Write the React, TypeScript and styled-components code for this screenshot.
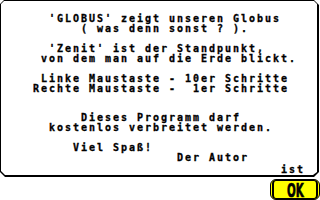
import styled, { createGlobalStyle } from "styled-components";

const GlobalStyle = createGlobalStyle`
  html, body {
    margin: 0;
    padding: 0;
    background: #ffffff;
  }
  body {
    width: 320px;
    height: 200px;
    overflow: hidden;
  }
`;

const Screen = styled.div`
  width: 320px;
  height: 200px;
  background: #ffffff;
  display: flex;
  flex-direction: column;
`;

// black plate with cut corners, the white face sits on it and leaves the border
const Frame = styled.div`
  box-sizing: border-box;
  width: 319px;
  height: 177px;
  padding: 1px 2px 2px 1px;
  background: #000000;
  clip-path: polygon(4px 0, 314px 0, 319px 5px, 319px 172px, 314px 177px, 5px 177px, 0 172px, 0 4px);
  display: flex;
`;

const Face = styled.div`
  flex: 1;
  background: #ffffff;
  padding-top: 13px;
  clip-path: polygon(3px 0, calc(100% - 3px) 0, 100% 3px, 100% calc(100% - 3px), calc(100% - 4px) 100%, 4px 100%, 0 calc(100% - 4px), 0 3px);
  display: flex;
  flex-direction: column;
`;

const Line = styled.div<{ $col: number; $shift?: number }>`
  height: 10px;
  line-height: 10px;
  padding-left: ${(p) => p.$col * 8}px;
  margin-top: ${(p) => p.$shift ?? 0}px;
  white-space: pre;
  font-family: "DejaVu Sans Mono", "Liberation Mono", monospace;
  font-weight: bold;
  font-size: 10px;
  letter-spacing: 1.979px;
  color: #000000;
  -webkit-text-stroke: 0.3px #000000;
`;

const ButtonRow = styled.div`
  display: flex;
  justify-content: flex-end;
  padding-top: 2px;
`;

const Button = styled.div`
  box-sizing: border-box;
  width: 50px;
  height: 21px;
  padding: 0 1px;
  border: 1px solid #000000;
  border-radius: 6px;
  background: #ffff00;
`;

const ButtonFace = styled.div`
  box-sizing: border-box;
  height: 100%;
  border-style: solid;
  border-color: #000000;
  border-width: 1px 2px;
  border-radius: 4px;
  background: #ffff00;
  display: flex;
  align-items: center;
  justify-content: center;
`;

const ButtonLabel = styled.span`
  display: inline-block;
  font-family: "DejaVu Sans", "Liberation Sans", sans-serif;
  font-weight: bold;
  font-size: 19px;
  line-height: 16px;
  color: #000000;
  transform: scaleX(0.54);
  -webkit-text-stroke: 0.7px #000000;
  margin-top: 1px;
`;

const lines: { col: number; text: string; shift?: number }[] = [
  { col: 6, text: "'GLOBUS' zeigt unseren Globus" },
  { col: 10, text: "( was denn sonst ? )." },
  { col: 0, text: "" },
  { col: 6, text: "'Zenit' ist der Standpunkt," },
  { col: 5, text: "von dem man auf die Erde blickt." },
  { col: 0, text: "" },
  { col: 5, text: "Linke Maustaste - 10er Schritte" },
  { col: 4, text: "Rechte Maustaste -  1er Schritte" },
  { col: 0, text: "" },
  { col: 0, text: "" },
  { col: 10, text: "Dieses Programm darf" },
  { col: 6, text: "kostenlos verbreitet werden." },
  { col: 0, text: "" },
  { col: 9, text: "Viel Spaß!" },
  { col: 22, text: "Der Autor" },
  { col: 35, text: "ist", shift: 2 },
];

export default function App() {
  return (
    <Screen>
      <GlobalStyle />
      <Frame>
        <Face>
          {lines.map((l, i) => (
            <Line key={i} $col={l.col} $shift={l.shift}>
              {l.text}
            </Line>
          ))}
        </Face>
      </Frame>
      <ButtonRow>
        <Button>
          <ButtonFace>
            <ButtonLabel>OK</ButtonLabel>
          </ButtonFace>
        </Button>
      </ButtonRow>
    </Screen>
  );
}
